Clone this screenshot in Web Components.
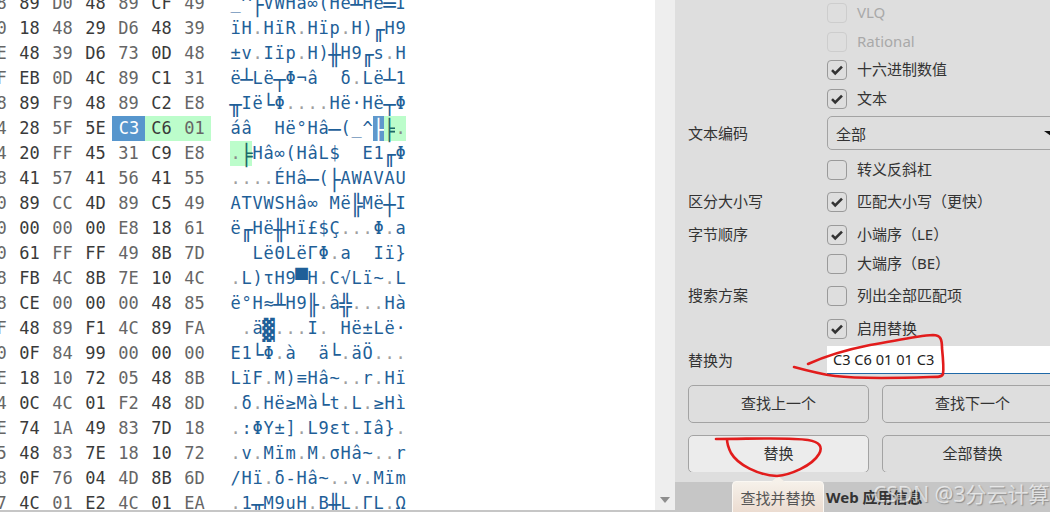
<!DOCTYPE html>
<html lang="zh">
<head>
<meta charset="utf-8">
<title>Hex</title>
<style>
html,body{margin:0;padding:0;width:1050px;height:512px;overflow:hidden;background:#fff}
</style>
</head>
<body>
<app-shell>
  <hex-view slot="hex"></hex-view>
  <v-scroll slot="scroll"></v-scroll>
  <find-panel slot="panel">
    <opt-row gap="3"><check-box disabled>VLQ</check-box></opt-row>
    <opt-row gap="9"><check-box disabled>Rational</check-box></opt-row>
    <opt-row gap="8"><check-box checked>十六进制数值</check-box></opt-row>
    <opt-row gap="9"><check-box checked>文本</check-box></opt-row>
    <opt-row gap="7"><span slot="label">文本编码</span><select-box>全部</select-box></opt-row>
    <opt-row gap="10"><check-box>转义反斜杠</check-box></opt-row>
    <opt-row gap="12" tight><span slot="label">区分大小写</span><check-box checked>匹配大小写（更快）</check-box></opt-row>
    <opt-row gap="13" tight><span slot="label">字节顺序</span><check-box checked>小端序（LE）</check-box></opt-row>
    <opt-row gap="9"><check-box>大端序（BE）</check-box></opt-row>
    <opt-row gap="12" tight><span slot="label">搜索方案</span><check-box>列出全部匹配项</check-box></opt-row>
    <opt-row gap="13"><check-box checked>启用替换</check-box></opt-row>
    <opt-row gap="7"><span slot="label">替换为</span><text-field>C3 C6 01 01 C3</text-field></opt-row>
    <button-pair gap="11"><push-button>查找上一个</push-button><push-button>查找下一个</push-button></button-pair>
    <button-pair gap="12"><push-button hover>替换</push-button><push-button>全部替换</push-button></button-pair>
  </find-panel>
  <status-bar slot="bar">Web 应用信息</status-bar>
  <water-mark slot="over">CSDN @3分云计算</water-mark>
  <tip-bubble slot="over">查找并替换</tip-bubble>
  <ink-marks slot="over"></ink-marks>
</app-shell>

<script>
function shadow(el, html){ el.attachShadow({mode:'open'}).innerHTML = html; }

customElements.define('app-shell', class extends HTMLElement{
  constructor(){super();shadow(this,`<style>
    :host{display:block;position:relative;width:1050px;height:512px;overflow:hidden;background:#c6c6c6}
    .main{display:flex;height:510px}
    .hex{flex:0 0 655px;background:#fff;overflow:hidden}
    .scroll{flex:0 0 20px;display:flex}
    .right{flex:1;min-width:0;display:flex;flex-direction:column}
    .panel{flex:0 0 482px;background:#dedede;overflow:hidden}
    .bar{flex:1}
  </style>
  <div class="main">
    <div class="hex"><slot name="hex"></slot></div>
    <div class="scroll"><slot name="scroll"></slot></div>
    <div class="right">
      <div class="panel"><slot name="panel"></slot></div>
      <div class="bar"><slot name="bar"></slot></div>
    </div>
  </div>
  <slot name="over"></slot>`);}
});

const DATA = [
 ['48','89','D0','48','89','CF','49','_^├VWHâ∞(Hë╨Hë═I'],
 ['D0','18','48','29','D6','48','39','ïH.HïR.Hïp.H)╓H9'],
 ['0E','48','39','D6','73','0D','48','±v.Iïp.H)╫H9╓s.H'],
 ['0F','EB','0D','4C','89','C1','31','ë┴Lë┬Φ¬â  δ.Lë┴1'],
 ['D8','89','F9','48','89','C2','E8','╥Ië└Φ....Hë·Hë┬Φ'],
 ['24','28','5F','5E','C3','C6','01','áâ  Hë°Hâ─(_^├╞.'],
 ['24','20','FF','45','31','C9','E8','.╞Hâ∞(HâL$  E1╓Φ'],
 ['D8','41','57','41','56','41','55','....ÉHâ─(├AWAVAU'],
 ['D0','89','CC','4D','89','C5','49','ATVWSHâ∞ Më╠Më┼I'],
 ['00','00','00','00','E8','18','61','ë╓Hë╫Hï£$Ç...Φ.a'],
 ['00','61','FF','FF','49','8B','7D','  LëΘLëΓΦ.a  Iï}'],
 ['D8','FB','4C','8B','7E','10','4C','.L)τH9▀H.C√Lï~.L'],
 ['D8','CE','00','00','00','48','85','ë°H≈╨H9╟.â╬...Hà'],
 ['FF','48','89','F1','4C','89','FA',' .ä▓...I. Hë±Lë·'],
 ['00','0F','84','99','00','00','00','E1└Φ.à  ä└.äÖ...'],
 ['7E','18','10','72','05','48','8B','LïF.M)≡Hâ~..r.Hï'],
 ['F4','0C','4C','01','F2','48','8D','.δ.Hë≥Mà└t.L.≥Hì'],
 ['FE','74','1A','49','83','7D','18','.:ΦY±].L9εt.Iâ}.'],
 ['85','48','83','7E','18','10','72','.v.Mïm.M.σHâ~..r'],
 ['D8','0F','76','04','4D','8B','6D','/Hï.δ-Hâ~..v.Mïm'],
 ['F7','4C','01','E2','4C','01','EA','.1╥M9uH.B╫L.ΓL.Ω'],
];
const MARK = {5:{hex:{4:'sel',5:'hit',6:'hit'},txt:{13:'sel',14:'hit',15:'hit'}},6:{hex:{},txt:{0:'hit',1:'hit'}}};
const BOX = /[\u2500-\u259F]/;

customElements.define('hex-row', class extends HTMLElement{
  constructor(){super();shadow(this,`<style>
    :host{display:flex;height:25px;font:17px/25px "DejaVu Sans Mono",monospace;white-space:pre}
    .b{flex:0 0 33px;text-align:center;color:#3a3a3a}
    .b.alt{color:#666}
    .b.sel{background:#5796cd;color:#fff;flex-basis:34px;margin-right:-1px}
    .b.hit{background:#bcfdcb}
    .cols{display:flex}
    .txt{display:flex;margin-left:19px;color:#1f5f98}
    .c{flex:0 0 11px;width:11px;text-align:center}
    .dot{color:#a0a0a0}
    .box{font-size:20.5px;line-height:28px;height:25px;display:flex;justify-content:center}
    .sel{background:#5f98cc;color:#fff}
    .hit{background:#bcfdcb}
    .txt .hit{color:#1b6a6a}
    .txt .hit.dot{color:#8a8a8a}
  </style><div class="cols"></div><div class="txt"></div>`);}
  set data(d){
    const m = d.mark||{hex:{},txt:{}};
    const cols=this.shadowRoot.querySelector('.cols'), txt=this.shadowRoot.querySelector('.txt');
    d.bytes.forEach((b,i)=>{
      const s=document.createElement('span');
      s.className='b'+(i%2===0?' alt':'')+(m.hex[i]?' '+m.hex[i]:'');
      s.textContent=b; cols.append(s);
    });
    [...d.text].forEach((ch,i)=>{
      const s=document.createElement('span');
      s.className='c'+(ch==='.'?' dot':'')+(BOX.test(ch)?' box':'')+(m.txt[i]?' '+m.txt[i]:'');
      s.textContent=ch; txt.append(s);
    });
  }
});

customElements.define('hex-view', class extends HTMLElement{
  constructor(){super();shadow(this,`<style>
    :host{display:block;margin-top:-9px;margin-left:-20px}
  </style>`);
    const root=this.shadowRoot;
    DATA.forEach((r,i)=>{
      const row=document.createElement('hex-row');
      row.data={bytes:r.slice(0,7),text:r[7],mark:MARK[i]};
      root.append(row);
    });
  }
});

customElements.define('v-scroll', class extends HTMLElement{
  constructor(){super();shadow(this,`<style>
    :host{display:flex;flex:1;align-items:flex-end;justify-content:center;background:#eeeeee;padding-bottom:7px;box-sizing:border-box}
    i{display:block;width:0;height:0;border:5px solid transparent;border-top:6px solid #8e8e8e;border-bottom:0}
  </style><i></i>`);}
});

customElements.define('find-panel', class extends HTMLElement{
  constructor(){super();shadow(this,`<style>
    :host{display:block;height:472px;overflow:hidden;padding:0 0 0 13px;width:400px;
      font:15px/20px "Noto Sans","Noto Sans CJK SC",sans-serif;color:#333}
  </style><slot></slot>`);}
});

customElements.define('opt-row', class extends HTMLElement{
  constructor(){super();shadow(this,`<style>
    :host{display:flex;align-items:center;min-height:20px}
    .l{flex:0 0 139px}
    :host([tight]) .l{margin-top:-2px}
    .v{flex:1;min-width:0}
  </style><div class="l"><slot name="label"></slot></div><div class="v"><slot></slot></div>`);}
  connectedCallback(){this.style.marginTop=(this.getAttribute('gap')||0)+'px';}
});

customElements.define('check-box', class extends HTMLElement{
  constructor(){super();shadow(this,`<style>
    :host{display:flex;align-items:center;gap:10px;height:20px}
    .t{padding-bottom:2px}
    .b{flex:0 0 20px;width:20px;height:20px;box-sizing:border-box;border:1px solid #9a9a9a;border-radius:4px;display:flex;align-items:center;justify-content:center}
    svg{display:none}
    :host([checked]) svg{display:block}
    :host([disabled]){color:#a9a9a9}
    :host([disabled]) .b{border-color:#cdcdcd}
  </style><span class="b"><svg width="14" height="12" viewBox="0 0 14 12"><path d="M2 6.2 L5.2 9.4 L12 2.6" fill="none" stroke="#333" stroke-width="2.6"/></svg></span><span class="t"><slot></slot></span>`);}
});

customElements.define('select-box', class extends HTMLElement{
  constructor(){super();shadow(this,`<style>
    :host{display:flex;align-items:center;justify-content:space-between;height:34px;box-sizing:border-box;width:238px;
      border:1px solid #a3a3a3;border-radius:5px;padding:0 6px 0 8px}
    span{padding-top:2px}
    i{display:block;width:0;height:0;border:7px solid transparent;border-top:5px solid #111;border-bottom:0}
  </style><span><slot></slot></span><i></i>`);}
});

customElements.define('text-field', class extends HTMLElement{
  constructor(){super();shadow(this,`<style>
    :host{display:flex;align-items:center;height:28px;box-sizing:border-box;width:238px;background:#fff;
      border-bottom:1px solid #1f69a8;padding:0 6px 1px;font-size:14.6px;color:#222}
  </style><slot></slot>`);}
});

customElements.define('button-pair', class extends HTMLElement{
  constructor(){super();shadow(this,`<style>
    :host{display:flex;gap:13px}
  </style><slot></slot>`);}
  connectedCallback(){this.style.marginTop=(this.getAttribute('gap')||0)+'px';}
});

customElements.define('push-button', class extends HTMLElement{
  constructor(){super();shadow(this,`<style>
    :host{display:flex;flex:0 0 181px;align-items:center;justify-content:center;height:38px;box-sizing:border-box;
      border:1px solid #a3a3a3;border-radius:5px;padding-bottom:2px}
    :host([hover]){background:#ececec}
  </style><slot></slot>`);}
});

customElements.define('status-bar', class extends HTMLElement{
  constructor(){super();shadow(this,`<style>
    :host{display:flex;align-items:center;height:30px;box-sizing:border-box;padding-left:151px;white-space:nowrap;
      font:bold 15px/30px "Noto Sans","Noto Sans CJK SC",sans-serif;color:#333}
  </style><slot></slot>`);}
});

customElements.define('water-mark', class extends HTMLElement{
  constructor(){super();shadow(this,`<style>
    :host{position:absolute;left:873px;top:479px;white-space:nowrap;
      font:21px/30px "Noto Sans","Noto Sans CJK SC",sans-serif;color:rgba(255,255,255,.65);text-shadow:1px 1px 1px rgba(90,90,90,.5)}
  </style><slot></slot>`);}
});

customElements.define('tip-bubble', class extends HTMLElement{
  constructor(){super();shadow(this,`<style>
    :host{position:absolute;left:732px;top:481px;width:92px;height:36px;box-sizing:border-box;
      background:linear-gradient(#f6f1ea,#ead9cd);border:1px solid #fbf8f3;border-radius:4px;
      font:15px/32px "Noto Sans CJK SC",sans-serif;color:#555;text-align:center;white-space:nowrap}
    i{position:absolute;left:38px;top:-6px;width:0;height:0;border:7px solid transparent;border-bottom:6px solid #f6f1ea;border-top:0}
  </style><i></i><slot></slot>`);}
});

customElements.define('ink-marks', class extends HTMLElement{
  constructor(){super();shadow(this,`<style>
    :host{position:absolute;left:0;top:0;width:1050px;height:512px;pointer-events:none}
    svg{display:block}
    path{fill:none;stroke:#e21c1c;stroke-width:2.6;stroke-linecap:round;stroke-linejoin:round}
  </style><svg width="1050" height="512" viewBox="0 0 1050 512">
    <path d="M808 364 C830 354 850 349 870 345 C895 341 915 336 933 335 C941 335 942 340 942 348 C943 358 944 368 943 374 C942 377 938 377 930 377 C900 378 860 379 835 376 C820 374 805 370 794 367"/>
    <path d="M716 439 C750 439 790 437 808 440 C820 442 823 447 819 454 C812 466 790 475 777 476 C758 475 738 465 731 453 C728 447 727 443 727 439"/>
  </svg>`);}
});
</script>
</body>
</html>
